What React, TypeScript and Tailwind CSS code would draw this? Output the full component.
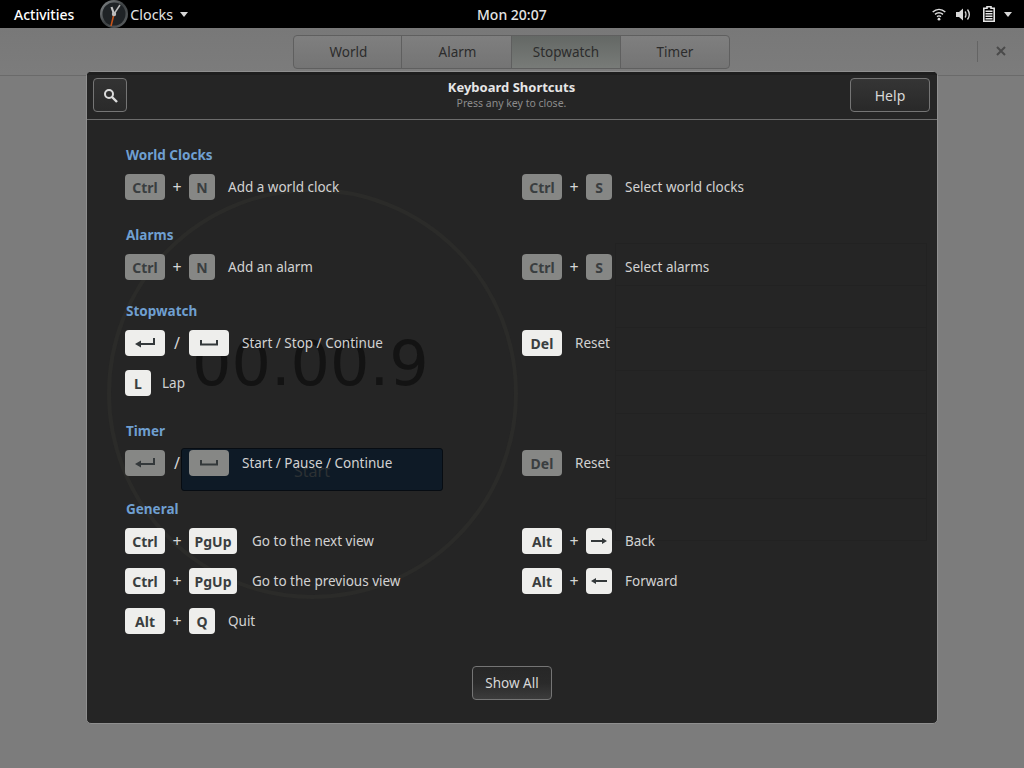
const font = { fontFamily: '"Noto Sans", sans-serif' };

function EnterIcon() {
  return (
    <svg width="20" height="10" viewBox="0 0 20 10" fill="none">
      <path d="M19 0V6H5" stroke="#33383a" strokeWidth="2" />
      <path d="M0 6L6 2.5V9.5Z" fill="#33383a" />
    </svg>
  );
}
function SpaceIcon() {
  return (
    <svg width="18" height="6" viewBox="0 0 18 6" fill="none">
      <path d="M1 0V4.5H17V0" stroke="#33383a" strokeWidth="2" />
    </svg>
  );
}
function Arrow({ left }: { left?: boolean }) {
  return (
    <svg width="16" height="8" viewBox="0 0 16 8" fill="#33383a">
      {left ? <path d="M0 4L5 1V3H16V5H5V7Z" /> : <path d="M16 4L11 1V3H0V5H11V7Z" />}
    </svg>
  );
}

function Key({ w, dim, children }: { w: string; dim?: boolean; children: React.ReactNode }) {
  const width = w === "26" ? "w-[26px]" : w === "40" ? "w-[40px]" : "w-[48px]";
  return (
    <span
      className={`${width} h-[26px] rounded-[4px] flex items-center justify-center text-[14px] font-bold text-[#3a3e40] ${
        dim ? "bg-[#868785]" : "bg-[#eeeeec]"
      }`}
    >
      {children}
    </span>
  );
}

function Sep({ c }: { c: string }) {
  return <span className="w-[24px] text-center text-[16px] leading-[20px] text-[#d6d6d6]">{c}</span>;
}

function Label({ children, className }: { children: React.ReactNode; className: string }) {
  return <span className={`text-[13.5px] text-[#d2d2d2] whitespace-nowrap ${className}`}>{children}</span>;
}

function Row({ children }: { children: React.ReactNode }) {
  return <div className="flex items-center h-[26px]">{children}</div>;
}

function Heading({ children, className }: { children: React.ReactNode; className: string }) {
  return <h3 className={`pl-[1px] h-[20px] leading-[20px] text-[13.5px] font-bold text-[#6f9fd0] ${className}`}>{children}</h3>;
}

function Columns({ left, right }: { left: React.ReactNode; right: React.ReactNode }) {
  return (
    <div className="grid grid-cols-[397px_1fr]">
      <div className="flex flex-col gap-[14px]">{left}</div>
      <div className="flex flex-col gap-[14px]">{right}</div>
    </div>
  );
}

const laps = ["top-[171px]", "top-[213px]", "top-[255px]", "top-[298px]", "top-[341px]", "top-[383px]", "top-[426px]", "top-[468px]"];

function Ghost() {
  return (
    <>
      <div className="absolute left-[20px] top-[116px] w-[411px] h-[411px] rounded-full border-[4px] border-[#2b2b29]" />
      <div
        style={{ fontFamily: '"DejaVu Sans", sans-serif' }}
        className="absolute left-[105px] top-[252px] text-[62px] leading-[80px] text-[#131313]"
      >
        00.00.9
      </div>
      <div className="absolute left-[94px] top-[376px] w-[262px] h-[43px] rounded-[3px] bg-[#0e1a26] border border-[#070c12] flex items-center justify-center pt-[3px] text-[16px] text-[#2c3134]">
        Start
      </div>
      <div className="absolute left-[528px] top-[171px] w-[312px] h-[298px] border-l border-r border-[#222222]" />
      {laps.map((t) => (
        <div key={t} className={`absolute left-[528px] w-[312px] h-px bg-[#222222] ${t}`} />
      ))}
    </>
  );
}

export default function App() {
  return (
    <div style={font} className="relative w-[1024px] h-[768px] bg-black overflow-hidden flex flex-col">
      {/* top bar */}
      <div className="h-[28px] pt-[1px] flex items-center text-[14px] text-[#e4e4e4] relative">
        <span className="ml-[14px] font-medium text-white">Activities</span>
        <svg className="ml-[25px] mt-[-1px]" width="30" height="28" viewBox="0 0 30 28">
          <defs>
            <linearGradient id="rim" x1="0" y1="0" x2="1" y2="1">
              <stop offset="0" stopColor="#8a8e90" />
              <stop offset="0.5" stopColor="#3d4143" />
              <stop offset="1" stopColor="#5d6163" />
            </linearGradient>
          </defs>
          <circle cx="15" cy="14" r="14" fill="url(#rim)" />
          <circle cx="15" cy="14" r="11.5" fill="#1f2326" />
          <path d="M15 14L21 5" stroke="#b8b8b8" strokeWidth="1.5" />
          <path d="M15 14L12.5 7" stroke="#c4c4c4" strokeWidth="2.2" />
          <path d="M15 14L12 26" stroke="#c8541a" strokeWidth="1.6" />
          <circle cx="15" cy="14" r="2.2" fill="#bdbdbd" />
        </svg>
        <span className="ml-[1px] text-[14.3px]">Clocks</span>
        <svg className="ml-[7px]" width="8" height="5" viewBox="0 0 8 5" fill="#d8d8d8"><path d="M0 0H8L4 5Z" /></svg>
        <span className="absolute left-[477px] font-medium">Mon 20:07</span>
        <div className="ml-auto mr-[12px] flex items-center mt-[-1px]">
          <svg width="14" height="13" viewBox="0 0 14 13" fill="none" stroke="#dcdcdc">
            <path d="M.7 4C4.5 .6 9.5 .6 13.3 4" strokeWidth="1.5" />
            <path d="M3 6.3C5.5 4.3 8.5 4.3 11 6.3" strokeWidth="1.5" />
            <path d="M5 8.6C6.2 7.7 7.8 7.7 9 8.6" strokeWidth="1.4" />
            <circle cx="7" cy="11.2" r="1.4" fill="#dcdcdc" stroke="none" />
          </svg>
          <svg className="ml-[10px]" width="15" height="13" viewBox="0 0 15 13" fill="#d8d8d8">
            <path d="M0 4H3L7 0.5V12.5L3 9H0Z" />
            <path d="M9 3.5C10.3 5 10.3 8 9 9.5M11.5 1.5C13.7 4.5 13.7 8.5 11.5 11.5" fill="none" stroke="#d8d8d8" strokeWidth="1.3" />
          </svg>
          <svg className="ml-[12px]" width="12" height="16" viewBox="0 0 12 16">
            <path d="M4 0.8H8V2.2H11.2V15.2H0.8V2.2H4Z" fill="none" stroke="#e4e4e4" strokeWidth="1.6" />
            <path d="M2.5 5.2H9.5M2.5 7.7H9.5M2.5 10.2H9.5M2.5 12.7H9.5" stroke="#e4e4e4" strokeWidth="1.5" />
          </svg>
          <svg className="ml-[9px]" width="8" height="5" viewBox="0 0 8 5" fill="#d8d8d8"><path d="M0 0H8L4 5Z" /></svg>
        </div>
      </div>

      {/* dimmed window */}
      <div className="flex-1 rounded-t-[8px] bg-[#7c7c7c] flex flex-col">
        <div className="relative h-[48px] border-b border-[#6a6a6a] bg-gradient-to-b from-[#787878] to-[#7c7c7c] flex items-start justify-center pt-[7px]">
          <div className="flex h-[34px] ml-[-1px] rounded-[4px] border border-[#5f5f5f] text-[13.5px] text-[#2c2c2c] bg-gradient-to-b from-[#7f7f7f] to-[#747474]">
            {[
              ["World", "w-[108px] pl-[2px]", ""],
              ["Alarm", "w-[110px] pl-[2px]", ""],
              ["Stopwatch", "w-[109px]", "bg-gradient-to-b from-[#646865] to-[#787b78]"],
              ["Timer", "w-[108px]", ""],
            ].map(([t, w, b], i) => (
              <span key={t} className={`${w} ${b} flex items-center justify-center ${i < 3 ? "border-r border-[#5f5f5f]" : ""}`}>
                {t}
              </span>
            ))}
          </div>
          <div className="absolute right-[46px] top-[13px] w-px h-[21px] bg-[#646464]" />
          <svg className="absolute right-[18px] top-[18px]" width="10" height="10" viewBox="0 0 10 10" stroke="#4a4a4a" strokeWidth="2">
            <path d="M1 1L9 9M9 1L1 9" />
          </svg>
        </div>
      </div>

      {/* shortcuts dialog */}
      <div className="absolute left-[86px] top-[71px] w-[852px] h-[653px] rounded-[5px] border border-[#8f8f8f] bg-[#252525] flex flex-col overflow-hidden">
        <Ghost />
        <div className="relative grid grid-cols-[1fr_auto_1fr] items-center h-[48px] pl-[6px] pr-[7px] pb-[4px] border-b border-[#6c6c6c] bg-[#252525] shrink-0 border-t-[3px] border-t-[#1e1e1e]">
          <button className="w-[34px] h-[34px] rounded-[4px] border border-[#757575] bg-gradient-to-b from-[#333] to-[#2a2a2a] flex items-center justify-center">
            <svg width="15" height="15" viewBox="0 0 15 15" fill="none" stroke="#dcdcdc">
              <circle cx="6" cy="6" r="4" strokeWidth="2" />
              <path d="M9 9L14 14" strokeWidth="2.4" />
            </svg>
          </button>
          <div className="flex flex-col items-center mt-[-1px]">
            <span className="text-[13px] leading-[17px] font-bold text-[#e6e6e6]">Keyboard Shortcuts</span>
            <span className="text-[10.5px] leading-[14px] text-[#8c8c8c]">Press any key to close.</span>
          </div>
          <button className="justify-self-end w-[80px] h-[34px] rounded-[4px] border border-[#757575] bg-gradient-to-b from-[#353535] to-[#292929] text-[14px] text-[#d8d8d8]">
            Help
          </button>
        </div>

        <div className="relative flex-1 flex flex-col pl-[38px] pt-[25px]">
          <Heading className="">World Clocks</Heading>
          <div className="mt-[9px]">
            <Columns
              left={<Row><Key w="40" dim>Ctrl</Key><Sep c="+" /><Key w="26" dim>N</Key><Label className="ml-[13px]">Add a world clock</Label></Row>}
              right={<Row><Key w="40" dim>Ctrl</Key><Sep c="+" /><Key w="26" dim>S</Key><Label className="ml-[13px]">Select world clocks</Label></Row>}
            />
          </div>
          <Heading className="mt-[25px]">Alarms</Heading>
          <div className="mt-[9px]">
            <Columns
              left={<Row><Key w="40" dim>Ctrl</Key><Sep c="+" /><Key w="26" dim>N</Key><Label className="ml-[13px]">Add an alarm</Label></Row>}
              right={<Row><Key w="40" dim>Ctrl</Key><Sep c="+" /><Key w="26" dim>S</Key><Label className="ml-[13px]">Select alarms</Label></Row>}
            />
          </div>
          <Heading className="mt-[21px]">Stopwatch</Heading>
          <div className="mt-[9px]">
            <Columns
              left={
                <>
                  <Row><Key w="40"><EnterIcon /></Key><Sep c="/" /><Key w="40"><SpaceIcon /></Key><Label className="ml-[13px]">Start / Stop / Continue</Label></Row>
                  <Row><Key w="26">L</Key><Label className="ml-[11px]">Lap</Label></Row>
                </>
              }
              right={<Row><Key w="40">Del</Key><Label className="ml-[13px]">Reset</Label></Row>}
            />
          </div>
          <Heading className="mt-[25px]">Timer</Heading>
          <div className="mt-[9px]">
            <Columns
              left={<Row><Key w="40" dim><EnterIcon /></Key><Sep c="/" /><Key w="40" dim><SpaceIcon /></Key><Label className="ml-[13px]">Start / Pause / Continue</Label></Row>}
              right={<Row><Key w="40" dim>Del</Key><Label className="ml-[13px]">Reset</Label></Row>}
            />
          </div>
          <Heading className="mt-[23px]">General</Heading>
          <div className="mt-[9px]">
            <Columns
              left={
                <>
                  <Row><Key w="40">Ctrl</Key><Sep c="+" /><Key w="48">PgUp</Key><Label className="ml-[15px]">Go to the next view</Label></Row>
                  <Row><Key w="40">Ctrl</Key><Sep c="+" /><Key w="48">PgUp</Key><Label className="ml-[15px]">Go to the previous view</Label></Row>
                  <Row><Key w="40">Alt</Key><Sep c="+" /><Key w="26">Q</Key><Label className="ml-[13px]">Quit</Label></Row>
                </>
              }
              right={
                <>
                  <Row><Key w="40">Alt</Key><Sep c="+" /><Key w="26"><Arrow /></Key><Label className="ml-[13px]">Back</Label></Row>
                  <Row><Key w="40">Alt</Key><Sep c="+" /><Key w="26"><Arrow left /></Key><Label className="ml-[13px]">Forward</Label></Row>
                </>
              }
            />
          </div>
          <div className="flex justify-center ml-[-38px] mt-[32px]">
            <button className="w-[80px] h-[34px] rounded-[4px] border border-[#757575] bg-gradient-to-b from-[#272727] via-[#2a2a2a] to-[#3c3c3c] text-[13.5px] text-[#d8d8d8]">
              Show All
            </button>
          </div>
        </div>
      </div>
    </div>
  );
}
